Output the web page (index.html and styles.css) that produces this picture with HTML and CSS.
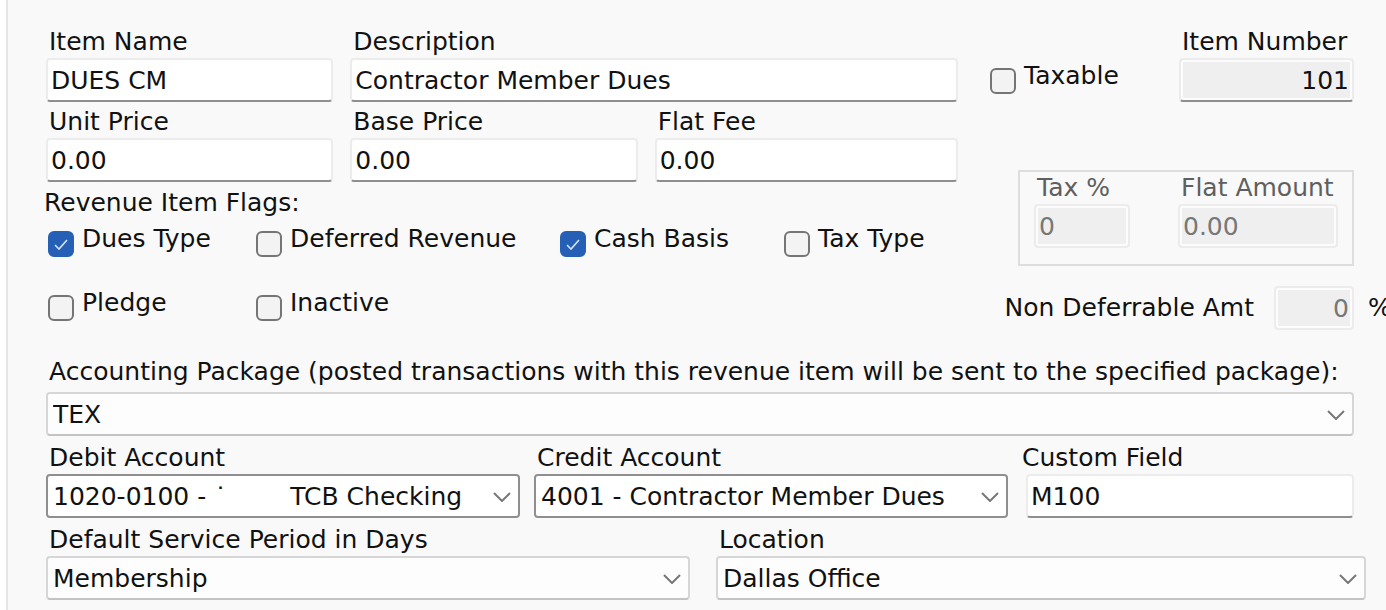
FILE: index.html
```html
<!DOCTYPE html>
<html lang="en">
<head>
<meta charset="utf-8">
<title>Revenue Item</title>
<link rel="stylesheet" href="styles.css">
</head>
<body>
<form class="panel">
  <div class="top">
    <div class="main">
      <div class="fields">
        <div class="field"><label for="name">Item Name</label><input class="box" id="name" type="text" value="DUES CM"></div>
        <div class="field wide"><label for="desc">Description</label><input class="box" id="desc" type="text" value="Contractor Member Dues"></div>
        <div class="field"><label for="unit">Unit Price</label><input class="box" id="unit" type="text" value="0.00"></div>
        <div class="field"><label for="base">Base Price</label><input class="box" id="base" type="text" value="0.00"></div>
        <div class="field"><label for="fee">Flat Fee</label><input class="box" id="fee" type="text" value="0.00"></div>
      </div>
      <fieldset class="flags">
        <legend>Revenue Item Flags:</legend>
        <div class="flag-grid">
          <label class="check"><input type="checkbox" checked><span>Dues Type</span></label>
          <label class="check"><input type="checkbox"><span>Deferred Revenue</span></label>
          <label class="check"><input type="checkbox" checked><span>Cash Basis</span></label>
          <label class="check"><input type="checkbox"><span>Tax Type</span></label>
          <label class="check"><input type="checkbox"><span>Pledge</span></label>
          <label class="check"><input type="checkbox"><span>Inactive</span></label>
        </div>
      </fieldset>
    </div>
    <div class="side">
      <div class="number-row">
        <label class="check"><input type="checkbox"><span>Taxable</span></label>
        <div class="field number"><label for="number">Item Number</label><input class="box inset right" id="number" type="text" value="101" readonly></div>
      </div>
      <div class="tax">
        <div class="field percent"><label for="tax">Tax %</label><input class="box inset" id="tax" type="text" value="0" disabled></div>
        <div class="field amount"><label for="flat">Flat Amount</label><input class="box inset" id="flat" type="text" value="0.00" disabled></div>
      </div>
      <div class="deferrable">
        <label for="defer">Non Deferrable Amt</label>
        <input class="box inset right" id="defer" type="text" value="0" disabled>
        <span class="unit">%</span>
      </div>
    </div>
  </div>
  <div class="bottom">
    <div class="field package">
      <label for="package">Accounting Package (posted transactions with this revenue item will be sent to the specified package):</label>
      <div class="select"><select class="box" id="package"><option>TEX</option></select><svg viewBox="0 0 18 10" aria-hidden="true"><path d="M1 1l8 8 8-8"/></svg></div>
    </div>
    <div class="accounts">
      <div class="field"><label for="debit">Debit Account</label>
        <div class="select strong"><select class="box" id="debit"><option>1020-0100 - ˙&nbsp;&nbsp;&nbsp;&nbsp;&nbsp;&nbsp;&nbsp;&nbsp;TCB Checking</option></select><svg viewBox="0 0 18 10" aria-hidden="true"><path d="M1 1l8 8 8-8"/></svg></div></div>
      <div class="field"><label for="credit">Credit Account</label>
        <div class="select strong"><select class="box" id="credit"><option>4001 - Contractor Member Dues</option></select><svg viewBox="0 0 18 10" aria-hidden="true"><path d="M1 1l8 8 8-8"/></svg></div></div>
      <div class="field custom"><label for="custom">Custom Field</label><input class="box" id="custom" type="text" value="M100"></div>
    </div>
    <div class="period">
      <div class="field"><label for="period">Default Service Period in Days</label>
        <div class="select"><select class="box" id="period"><option>Membership</option></select><svg viewBox="0 0 18 10" aria-hidden="true"><path d="M1 1l8 8 8-8"/></svg></div></div>
      <div class="field"><label for="location">Location</label>
        <div class="select"><select class="box" id="location"><option>Dallas Office</option></select><svg viewBox="0 0 18 10" aria-hidden="true"><path d="M1 1l8 8 8-8"/></svg></div></div>
    </div>
  </div>
</form>
</body>
</html>
```
FILE: styles.css
```css
* { box-sizing: border-box; }
body {
  margin: 0;
  background: #fff;
  color: #111;
  font: 25px/32px "DejaVu Sans", Verdana, sans-serif;
  overflow-x: hidden;
}
.panel {
  min-height: 100vh;
  margin-left: 6px;
  padding: 26px 0 8px 38px;
  border-left: 2px solid #e5e5e5;
  background: #f9f9f9;
}
.top { display: grid; grid-template-columns: 912fr 428fr; }
.main { min-width: 0; }
.side { min-width: 0; padding-left: 32px; }
.fields {
  display: grid;
  grid-template-columns: 287fr 287fr 303fr;
  gap: 4px 17px;
}
.wide { grid-column: span 2; }
.field { display: flex; flex-direction: column; min-width: 0; }
.field > label { padding-left: 3px; white-space: nowrap; }
.box {
  width: 100%;
  height: 44px;
  margin: 0;
  padding: 0 3px;
  border: 2px solid #ececec;
  border-bottom-color: #8f8f8f;
  border-radius: 4px;
  background: #fff;
  color: #111;
  font: inherit;
}
.inset { background: #efefef; box-shadow: inset 0 0 0 2px #fcfcfc; }
.inset:disabled { border-color: #ececec; color: #777; opacity: 1; }
.right { text-align: right; }

.flags { margin: 0; padding: 0; border: 0; min-width: 0; }
.flags legend { padding: 5px 0 0; margin-left: -2px; }
.flag-grid {
  display: grid;
  grid-template-columns: 208fr 304fr 224fr 174fr;
  row-gap: 30px;
  padding: 4px 0 0 2px;
}
.check { display: flex; gap: 8px; white-space: nowrap; }
.check input {
  appearance: none;
  flex: none;
  width: 26px;
  height: 26px;
  margin: 8px 0 0;
  border: 2px solid #757575;
  border-radius: 6px;
  background: #f3f3f3;
}
.check input:checked {
  border-color: #265fb6;
  background: #265fb6 url("data:image/svg+xml,%3Csvg xmlns='http://www.w3.org/2000/svg' viewBox='0 0 22 22'%3E%3Cpath d='M5 12l4 4 8-9' fill='none' stroke='%23d5e4f7' stroke-width='1.6'/%3E%3C/svg%3E") center / 22px;
}
.number-row { display: flex; justify-content: space-between; padding-right: 32px; }
.number-row .check { margin-top: 34px; }
.number { flex: 0 1 175px; }
.tax {
  display: flex;
  justify-content: space-between;
  margin: 68px 32px 20px 28px;
  padding: 0 14px 16px;
  border: 2px solid #dedede;
}
.tax label { color: #5f5f5f; }
.percent { flex: 0 1 96px; }
.amount { flex: 0 1 160px; }
.deferrable {
  display: flex;
  align-items: center;
  justify-content: flex-end;
  white-space: nowrap;
}
.deferrable .box { flex: 0 0 80px; margin: 0 14px 0 20px; }
.unit { flex: 0 0 18px; min-width: 0; }

.bottom { padding-right: 32px; margin-top: 26px; }
.package { gap: 4px; }
.select { position: relative; }
.select select {
  appearance: none;
  display: block;
  padding: 1px 44px 0 5px;
  border-color: #d6d6d6;
  border-bottom-color: #c3c3c3;
  background: #fdfdfd;
}
.strong select { border-color: #8f8f8f; background: #fff; }
.select svg {
  position: absolute;
  right: 9px;
  top: 18px;
  width: 18px;
  height: 10px;
  fill: none;
  stroke: #777;
  stroke-width: 2;
  pointer-events: none;
}
.accounts, .period { display: grid; margin-top: 6px; }
.accounts { grid-template-columns: 474fr 474fr 332fr; gap: 14px; }
.custom > label { padding-left: 0; }
.custom .box { width: auto; margin-left: 4px; }
.period { grid-template-columns: 644fr 650fr; gap: 26px; margin-right: -12px; }
```
